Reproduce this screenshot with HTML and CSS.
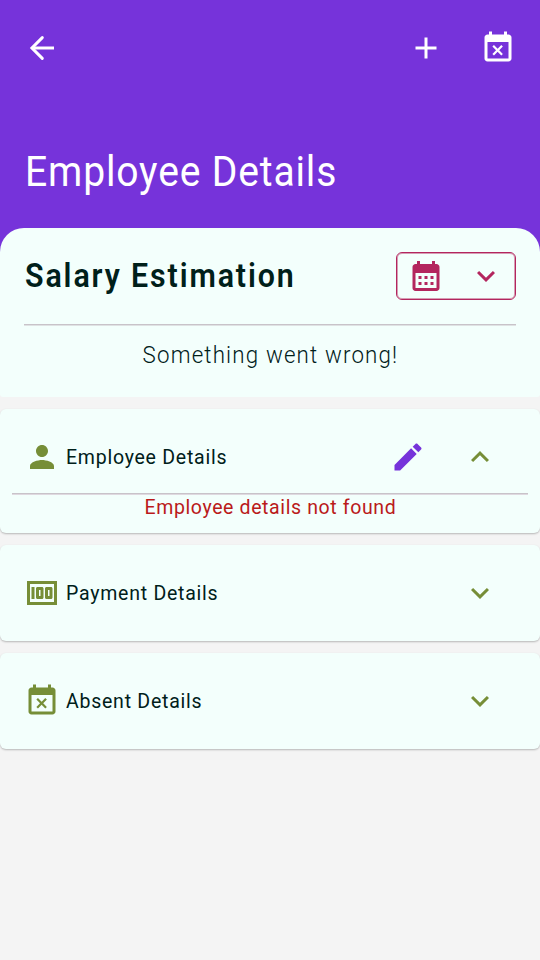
FILE: index.html
```html
<!DOCTYPE html>
<html lang="en">
<head>
<meta charset="utf-8">
<title>Employee Details</title>
<link rel="stylesheet" href="styles.css">
</head>
<body>
<svg class="defs" aria-hidden="true">
  <symbol id="busy" viewBox="0 0 24 24"><path d="M9.31 17l2.44-2.44L14.19 17l1.06-1.06-2.44-2.44 2.44-2.44L14.19 10l-2.44 2.44L9.31 10l-1.06 1.06 2.44 2.44-2.44 2.44L9.31 17zM19 3h-1V1h-2v2H8V1H6v2H5c-1.11 0-1.99.9-1.99 2L3 19c0 1.1.89 2 2 2h14c1.1 0 2-.9 2-2V5c0-1.1-.9-2-2-2zm0 16H5V8h14v11z"/></symbol>
  <symbol id="down" viewBox="0 0 24 24"><path d="M16.59 8.59L12 13.17 7.41 8.59 6 10l6 6 6-6z"/></symbol>
</svg>
<header class="top">
  <nav class="bar">
    <svg class="icon" viewBox="0 0 24 24"><path class="line" d="M20 12H5.6"/><path class="line round" d="M12.2 5.1L5.3 12l6.9 6.9"/></svg>
    <div class="actions">
      <svg class="icon" viewBox="0 0 24 24"><path d="M19 13h-6v6h-2v-6H5v-2h6V5h2v6h6v2z"/></svg>
      <svg class="icon"><use href="#busy"/></svg>
    </div>
  </nav>
  <h1 class="title"><span>Employee Details</span></h1>
</header>
<main class="content">
  <section class="salary">
    <div class="salary-head">
      <h2 class="salary-title"><span>Salary Estimation</span></h2>
      <div class="picker">
        <svg class="icon" viewBox="0 0 24 24"><path d="M19 4h-1V2h-2v2H8V2H6v2H5c-1.11 0-1.99.9-1.99 2L3 20c0 1.1.89 2 2 2h14c1.1 0 2-.9 2-2V6c0-1.1-.9-2-2-2zm0 16H5V10h14v10zM9 14H7v-2h2v2zm4 0h-2v-2h2v2zm4 0h-2v-2h2v2zm-8 4H7v-2h2v2zm4 0h-2v-2h2v2zm4 0h-2v-2h2v2z"/></svg>
        <svg class="icon"><use href="#down"/></svg>
      </div>
    </div>
    <p class="message"><span>Something went wrong!</span></p>
  </section>
  <section class="card">
    <div class="row">
      <svg class="icon" viewBox="0 0 24 24"><path d="M12 12c2.21 0 4-1.79 4-4s-1.79-4-4-4-4 1.79-4 4 1.79 4 4 4zm0 2c-2.67 0-8 1.34-8 4v2h16v-2c0-2.66-5.33-4-8-4z"/></svg>
      <h3 class="label"><span>Employee Details</span></h3>
      <svg class="icon edit" viewBox="0 0 24 24"><path d="M3 17.25V21h3.75L17.81 9.94l-3.75-3.75L3 17.25zM20.71 7.04c.39-.39.39-1.02 0-1.41l-2.34-2.34c-.39-.39-1.02-.39-1.41 0l-1.83 1.83 3.75 3.75 1.83-1.83z"/></svg>
      <svg class="icon" viewBox="0 0 24 24"><path d="M12 8l-6 6 1.41 1.41L12 10.83l4.59 4.58L18 14z"/></svg>
    </div>
    <p class="error"><span>Employee details not found</span></p>
  </section>
  <section class="card">
    <div class="row">
      <svg class="icon" viewBox="0 0 24 24"><path d="M5 8h2v8H5zm7 0H9c-.55 0-1 .45-1 1v6c0 .55.45 1 1 1h3c.55 0 1-.45 1-1V9c0-.55-.45-1-1-1zm-1 6h-1v-4h1v4zm7-6h-3c-.55 0-1 .45-1 1v6c0 .55.45 1 1 1h3c.55 0 1-.45 1-1V9c0-.55-.45-1-1-1zm-1 6h-1v-4h1v4zM2 4v16h20V4H2zm2 14V6h16v12H4z"/></svg>
      <h3 class="label"><span>Payment Details</span></h3>
      <svg class="icon"><use href="#down"/></svg>
    </div>
  </section>
  <section class="card">
    <div class="row">
      <svg class="icon"><use href="#busy"/></svg>
      <h3 class="label"><span>Absent Details</span></h3>
      <svg class="icon"><use href="#down"/></svg>
    </div>
  </section>
</main>
</body>
</html>
```
FILE: styles.css
```css
* { box-sizing: border-box; margin: 0; }
body {
  height: 960px;
  overflow: hidden;
  background: #f4f4f4;
  color: #00201a;
  font-family: Roboto, "Liberation Sans", sans-serif;
}
.defs { display: none; }
.icon { width: 36px; height: 36px; flex: none; fill: currentColor; }
.line { fill: none; stroke: currentColor; stroke-width: 2; }
.round { stroke-linecap: round; }
h1, h2, h3, p { white-space: nowrap; }
h1 span, h2 span, h3 span, p span { display: inline-block; transform-origin: 0 50%; }
.top { height: 260px; background: #7633da; color: #fff; }
.bar { height: 96px; padding: 0 24px; display: flex; align-items: center; justify-content: space-between; }
.actions { display: flex; gap: 36px; }
.title { padding: 51px 24px 0 25px; font-size: 42px; line-height: 50px; font-weight: 400; }
.title span { transform: scaleX(.93); letter-spacing: .9px; }
.content { margin-top: -32px; display: flex; flex-direction: column; gap: 12px; }
.salary { height: 169px; padding: 24px; background: #f3fffc; border-radius: 24px 24px 3px 3px; }
.salary-head { display: flex; justify-content: space-between; align-items: center; box-sizing: content-box; height: 48px; padding-bottom: 24px; border-bottom: 1px solid #c8c3c9; box-shadow: 0 1px #dfe2e3; }
.salary-title { padding-left: 1px; font-size: 33px; line-height: 48px; font-weight: 600; }
.salary-title span { transform: scaleX(.92); letter-spacing: 2.05px; }
.picker { width: 120px; height: 48px; padding: 0 11px; display: flex; align-items: center; justify-content: space-between; border: 1px solid #b3265e; box-shadow: inset 0 0 0 1px rgba(179, 38, 94, .45); border-radius: 6px; color: #b3265e; }
.message { margin-top: 12px; padding-left: 1px; line-height: 36px; font-size: 24px; font-weight: 300; text-align: center; }
.message span { transform-origin: 50% 50%; transform: scaleX(.93); letter-spacing: 1.25px; }
.card { background: #f3fffc; border-radius: 6px; box-shadow: 0 1px 2px rgba(0, 0, 0, .25); }
.row { height: 96px; padding: 0 42px 0 24px; display: flex; align-items: center; color: #768e37; }
.label { flex: 1; padding-left: 6px; font-size: 21px; line-height: 30px; font-weight: 400; color: #00201a; }
.label span { transform: scaleX(.93); letter-spacing: .8px; }
.edit { margin-right: 36px; color: #7633da; }
.error { height: 40px; margin: -12px 12px 0; padding-left: 1px; border-top: 1px solid #c8c3c9; box-shadow: inset 0 1px #dfd9e0; color: #ba1a1a; font-size: 21px; line-height: 27px; font-weight: 400; text-align: center; }
.error span { transform-origin: 50% 50%; transform: scaleX(.93); letter-spacing: .65px; }
```
